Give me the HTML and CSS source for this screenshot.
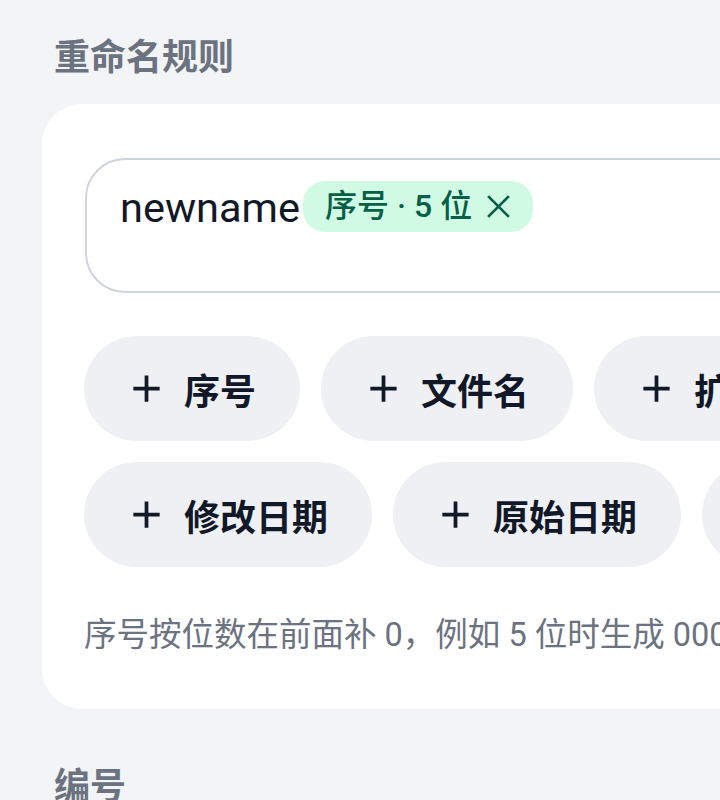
FILE: index.html
```html
<!DOCTYPE html>
<html lang="zh-CN">
<head>
<meta charset="utf-8">
<title>重命名规则</title>
<link rel="stylesheet" href="styles.css">
</head>
<body>
<div class="page">
  <h2 class="section-title">重命名规则</h2>
  <div class="card">
    <div class="pattern-input">
      <span class="literal">newname</span><span class="token">序号 · 5 位<svg class="token-close" viewBox="0 0 24 24" width="25" height="25"><path d="M2 2L22 22M22 2L2 22" /></svg></span>
    </div>
    <div class="btn-group">
      <button class="add-btn"><svg class="plus" viewBox="0 0 24 24" width="45" height="45"><path d="M12 5v14M5 12h14"/></svg><span>序号</span></button>
      <button class="add-btn"><svg class="plus" viewBox="0 0 24 24" width="45" height="45"><path d="M12 5v14M5 12h14"/></svg><span>文件名</span></button>
      <button class="add-btn"><svg class="plus" viewBox="0 0 24 24" width="45" height="45"><path d="M12 5v14M5 12h14"/></svg><span>扩展名</span></button>
      <button class="add-btn"><svg class="plus" viewBox="0 0 24 24" width="45" height="45"><path d="M12 5v14M5 12h14"/></svg><span>修改日期</span></button>
      <button class="add-btn"><svg class="plus" viewBox="0 0 24 24" width="45" height="45"><path d="M12 5v14M5 12h14"/></svg><span>原始日期</span></button>
      <button class="add-btn"><svg class="plus" viewBox="0 0 24 24" width="45" height="45"><path d="M12 5v14M5 12h14"/></svg><span>拍摄日期</span></button>
    </div>
    <p class="hint">序号按位数在前面补 0，例如 5 位时生成 00001。</p>
  </div>
  <h2 class="section-title second">编号</h2>
</div>
</body>
</html>
```
FILE: styles.css
```css
html, body {
  margin: 0;
  padding: 0;
}
body {
  background: #f3f4f6;
  font-family: Roboto, "Noto Sans CJK SC", sans-serif;
  overflow: hidden;
  width: 720px;
  height: 800px;
}
.page {
  padding: 36px 0 0 42px;
  width: 1100px;
}
.section-title {
  margin: 0 0 24px 12px;
  font-size: 36px;
  line-height: 44px;
  font-weight: 700;
  color: #6b7280;
}
.section-title.second {
  margin-top: 56px;
}
.card {
  width: 960px;
  background: #ffffff;
  border-radius: 40px;
  padding: 54px 42px 51px 42px;
}
.pattern-input {
  box-sizing: border-box;
  min-height: 135px;
  margin-left: 1px;
  border: 2px solid #cfd4dc;
  border-radius: 40px;
  padding: 21px 33px;
  display: flex;
  align-items: flex-start;
}
.literal {
  font-size: 41.5px;
  line-height: 54px;
  color: #111827;
}
.token {
  display: inline-flex;
  align-items: center;
  height: 51px;
  line-height: 51px;
  margin-left: 3px;
  padding: 0 22px 0 22px;
  border-radius: 22px;
  background: #d1fae5;
  color: #065f46;
  font-size: 32px;
  font-weight: 500;
  white-space: pre;
}
.token-close {
  margin-left: 14px;
  fill: none;
  stroke: #065f46;
  stroke-width: 2.6;
}
.btn-group {
  margin-top: 43px;
  display: flex;
  flex-wrap: wrap;
  gap: 21px;
}
.add-btn {
  display: inline-flex;
  align-items: center;
  height: 105px;
  padding: 0 44px 0 40px;
  border: none;
  border-radius: 53px;
  background: #eff0f3;
  color: #111827;
  font-family: Roboto, "Noto Sans CJK SC", sans-serif;
  font-size: 36px;
  font-weight: 700;
}
.add-btn span {
  margin-left: 15px;
}
.plus {
  fill: none;
  stroke: #111827;
  stroke-width: 2;
}
.hint {
  margin: 46px 0 0 0;
  font-size: 32.5px;
  line-height: 45px;
  color: #6b7280;
  white-space: nowrap;
}
```
